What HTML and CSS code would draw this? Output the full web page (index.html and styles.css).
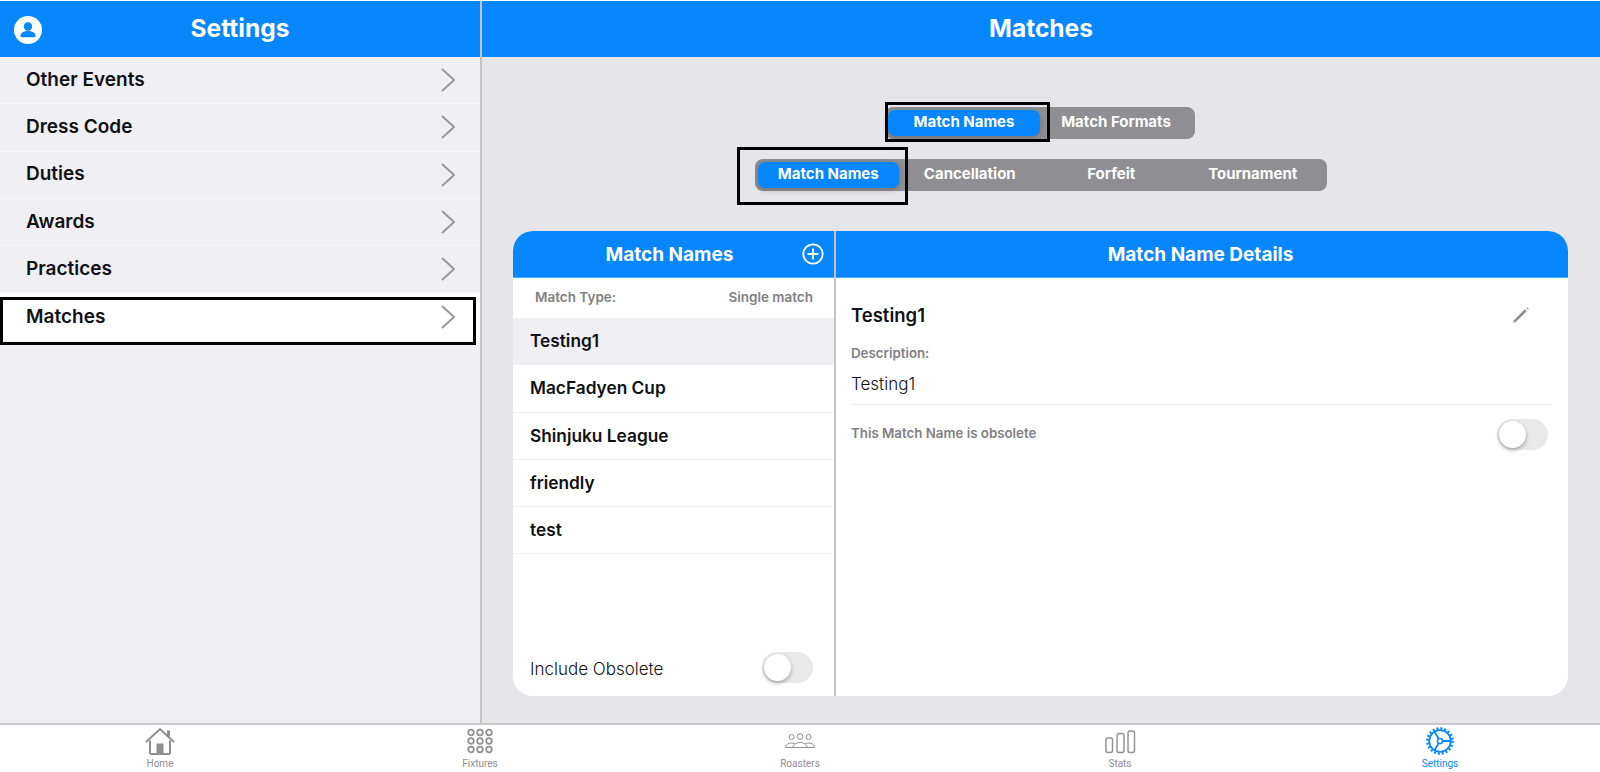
FILE: index.html
```html
<!DOCTYPE html>
<html lang="en">
<head>
  <meta charset="UTF-8" />
  <title>Settings - Matches</title>
  <link rel="stylesheet" href="styles.css">
</head>
<body>
  <div class="panes">
    <aside class="sidebar">
      <header class="topbar">
        <svg class="user-icon" viewBox="0 0 28 28" width="28" height="28">
          <circle cx="14" cy="14" r="14" fill="#fff"/>
          <circle cx="14" cy="10.5" r="4.2" fill="#0787ff"/>
          <path d="M6.5 20c0-3.6 3.6-5 7.500-5s7.500 1.400 7.500 5c0 .8-.5 1.200-1.200 1.200H7.700c-.7 0-1.200-.4-1.200-1.200z" fill="#0787ff"/>
        </svg>
        <h1>Settings</h1>
      </header>
      <ul class="menu">
        <li class="menu-row"><span>Other Events</span><svg class="chev" viewBox="0 0 14 24" width="14" height="24"><path d="M1 1l12 11L1 23" /></svg></li>
        <li class="menu-row"><span>Dress Code</span><svg class="chev" viewBox="0 0 14 24" width="14" height="24"><path d="M1 1l12 11L1 23" /></svg></li>
        <li class="menu-row"><span>Duties</span><svg class="chev" viewBox="0 0 14 24" width="14" height="24"><path d="M1 1l12 11L1 23" /></svg></li>
        <li class="menu-row"><span>Awards</span><svg class="chev" viewBox="0 0 14 24" width="14" height="24"><path d="M1 1l12 11L1 23" /></svg></li>
        <li class="menu-row"><span>Practices</span><svg class="chev" viewBox="0 0 14 24" width="14" height="24"><path d="M1 1l12 11L1 23" /></svg></li>
        <li class="menu-row active">
          <span>Matches</span><svg class="chev" viewBox="0 0 14 24" width="14" height="24"><path d="M1 1l12 11L1 23" /></svg>
          <i class="mark mark-row"></i>
        </li>
      </ul>
    </aside>

    <main class="content">
      <header class="topbar"><h1>Matches</h1></header>

      <div class="seg seg-top">
        <button class="seg-btn on">Match Names</button>
        <button class="seg-btn">Match Formats</button>
        <i class="mark mark-top"></i>
      </div>
      <div class="seg seg-sub">
        <button class="seg-btn on">Match Names</button>
        <button class="seg-btn">Cancellation</button>
        <button class="seg-btn">Forfeit</button>
        <button class="seg-btn">Tournament</button>
        <i class="mark mark-sub"></i>
      </div>

      <section class="card">
        <div class="list-col">
          <div class="card-head">
            <h2 class="list-title">Match Names</h2>
            <svg class="plus" viewBox="0 0 22 22" width="22" height="22">
              <circle cx="11" cy="11" r="9.700"/>
              <path d="M11 5.500v11M5.500 11h11"/>
            </svg>
          </div>
          <div class="type-row"><span>Match Type:</span><span>Single match</span></div>
          <ul class="names">
            <li class="name selected">Testing1</li>
            <li class="name">MacFadyen Cup</li>
            <li class="name">Shinjuku League</li>
            <li class="name">friendly</li>
            <li class="name">test</li>
          </ul>
          <div class="obsolete-row">
            <span>Include Obsolete</span>
            <div class="toggle"><div class="knob"></div></div>
          </div>
        </div>

        <div class="detail-col">
          <div class="card-head"><h2 class="detail-heading">Match Name Details</h2></div>
          <div class="detail-body">
            <div class="detail-title">
              <h3>Testing1</h3>
              <svg class="pencil" viewBox="0 0 18 18" width="18" height="18">
                <path d="M1.200 16.800l.7-2.600L12.800 3.300l1.900 1.900L3.800 16.100z" fill="#8e8e93"/>
                <path d="M14.300 1.900l.8-.7 1.700 1.700-.7.8z" fill="#8e8e93"/>
              </svg>
            </div>
            <div class="label">Description:</div>
            <div class="value">Testing1</div>
            <div class="obsolete-detail">
              <span class="label">This Match Name is obsolete</span>
              <div class="toggle"><div class="knob"></div></div>
            </div>
          </div>
        </div>
      </section>
    </main>
  </div>

  <nav class="tabs">
    <div class="tab">
      <svg viewBox="0 0 32 32" width="32" height="32">
        <g transform="translate(1 1.500)">
          <path d="M1 14.500L15 1.500l14 13" fill="none" stroke="#8e8e93" stroke-width="2"/>
          <path d="M22 3h3v7l-3-3z" fill="#8e8e93"/>
          <path d="M5 13v12c0 1 .6 1.500 1.500 1.500h17c.9 0 1.500-.5 1.500-1.500V13" fill="none" stroke="#8e8e93" stroke-width="2"/>
          <rect x="11.500" y="16" width="7" height="10.500" fill="#8e8e93"/>
        </g>
      </svg>
      <span>Home</span>
    </div>
    <div class="tab">
      <svg viewBox="0 0 32 32" width="32" height="32" fill="none" stroke="#8e8e93" stroke-width="1.700">
        <circle cx="7" cy="6.500" r="2.800"/><circle cx="16" cy="6.500" r="2.800"/><circle cx="25" cy="6.500" r="2.800"/>
        <circle cx="7" cy="15" r="2.800"/><circle cx="16" cy="15" r="2.800"/><circle cx="25" cy="15" r="2.800"/>
        <circle cx="7" cy="23.500" r="2.800"/><circle cx="16" cy="23.500" r="2.800"/><circle cx="25" cy="23.500" r="2.800"/>
      </svg>
      <span>Fixtures</span>
    </div>
    <div class="tab">
      <svg viewBox="0 0 32 32" width="32" height="32" fill="none" stroke="#8e8e93" stroke-width="1">
        <circle cx="7.700" cy="11" r="2.500"/><circle cx="16" cy="10.500" r="2.800"/><circle cx="24.500" cy="11" r="2.500"/>
        <path d="M1.500 21.500c0-2.600 2.500-4.500 6-4.500 1.200 0 2.300.2 3.200.7"/>
        <path d="M30.500 21.500c0-2.600-2.500-4.500-6-4.500-1.200 0-2.300.2-3.200.7"/>
        <path d="M9 21.500c0-2.800 3-5 7-5s7 2.200 7 5z"/>
        <path d="M1.500 21.500H9M23 21.500h7.500"/>
      </svg>
      <span>Roasters</span>
    </div>
    <div class="tab">
      <svg viewBox="0 0 32 32" width="32" height="32" fill="none" stroke="#8e8e93" stroke-width="1.400">
        <rect x="2" y="12" width="6.500" height="14.500" rx="2"/>
        <rect x="13" y="7.500" width="7" height="19" rx="2"/>
        <rect x="24" y="5" width="6.500" height="21.500" rx="2"/>
      </svg>
      <span>Stats</span>
    </div>
    <div class="tab current">
      <svg viewBox="0 0 32 32" width="32" height="32" fill="none" stroke="#0787ff">
        <g transform="translate(1 0)">
          <circle cx="15" cy="15" r="12.600" stroke-width="2.400" stroke-dasharray="2 1.960"/>
          <circle cx="15" cy="15" r="10.800" stroke-width="1.800"/>
          <circle cx="15" cy="15" r="2.600" stroke-width="1.500"/>
          <path d="M17.600 15h8M13.700 12.800L9.500 5.800M13.700 17.200l-4.200 7" stroke-width="1.800"/>
        </g>
      </svg>
      <span>Settings</span>
    </div>
  </nav>
</body>
</html>
```

FILE: styles.css
```css
* {
  box-sizing: border-box;
}

body {
  margin: 0;
  height: 772px;
  overflow: hidden;
  display: flex;
  flex-direction: column;
  padding-top: 1px;
  background: #fff;
  color: #111114;
  font-family: Inter, "Open Sans", sans-serif;
}

h1, h2, h3, ul {
  margin: 0;
  padding: 0;
}

ul {
  list-style: none;
}

.panes {
  flex: 1;
  display: flex;
  min-height: 0;
}

.topbar {
  height: 56px;
  display: flex;
  align-items: center;
  justify-content: center;
  position: relative;
  padding-bottom: 2px;
  background: #0787ff;
  color: #fff;
  flex-shrink: 0;
}

.topbar h1 {
  font-size: 24.500px;
  font-weight: 700;
}

.user-icon {
  position: absolute;
  left: 14px;
  top: 15px;
}

/* left list */
.sidebar {
  width: 482px;
  flex-shrink: 0;
  background: #efeff4;
  border-right: 2px solid #c4c4c6;
}

.menu-row {
  height: 47.300px;
  display: flex;
  align-items: center;
  justify-content: space-between;
  padding: 0 25px 0 26px;
  border-bottom: 1px solid #f7f7fa;
  font-size: 19px;
  font-weight: 600;
  position: relative;
}

.menu-row span {
  padding-bottom: 2px;
}

.menu-row.active {
  background: #fff;
  border-bottom: none;
}

.chev {
  fill: none;
  stroke: #98989d;
  stroke-width: 2;
}

.mark {
  position: absolute;
  border: 3px solid #000;
  pointer-events: none;
}

.mark-row {
  left: 0;
  top: 4px;
  width: 476px;
  height: 48px;
}

/* right side */
.content {
  flex: 1;
  min-width: 0;
  background: #e5e5ea;
  display: flex;
  flex-direction: column;
  align-items: center;
}

.content .topbar {
  width: 100%;
}

.seg {
  display: flex;
  position: relative;
  padding: 3px;
  background: #8e8e93;
  border-radius: 8px;
  height: 32px;
}

.seg-top {
  margin: 50px 2px 0 0;
}

.seg-sub {
  margin: 20px 1px 0 0;
}

.seg-btn {
  border: none;
  background: none;
  color: #fff;
  font-family: Inter, sans-serif;
  font-size: 15px;
  font-weight: 700;
  padding: 0 0 4px;
  border-radius: 7px;
}

.seg-top .seg-btn {
  width: 152px;
}

.seg-sub .seg-btn {
  width: 141.500px;
}

.seg-btn.on {
  background: #0787ff;
  box-shadow: 0 2px 6px rgba(0, 0, 0, 0.2);
}

.mark-top {
  left: 0;
  top: -5px;
  width: 165px;
  height: 40px;
}

.mark-sub {
  left: -18px;
  top: -12px;
  width: 171px;
  height: 58px;
}

.card {
  width: 1055px;
  height: 465px;
  margin-top: 40px;
  margin-left: 31px;
  align-self: flex-start;
  display: flex;
  background: #fff;
  border-radius: 20px;
  overflow: hidden;
}

.card-head {
  height: 47px;
  display: flex;
  align-items: center;
  justify-content: center;
  position: relative;
  background: #0787ff;
  color: #fff;
  border-bottom: 1px solid #4aa8ff;
  flex-shrink: 0;
}

.card-head h2 {
  font-size: 19px;
  font-weight: 700;
}

.list-title {
  padding-right: 8px;
}

.detail-heading {
  padding-right: 3px;
}

.plus {
  position: absolute;
  right: 10px;
  top: 12px;
  fill: none;
  stroke: #fff;
  stroke-width: 1.800;
}

.list-col {
  width: 323px;
  flex-shrink: 0;
  display: flex;
  flex-direction: column;
  border-right: 2px solid #c4c4c6;
}

.type-row {
  height: 40px;
  display: flex;
  align-items: center;
  justify-content: space-between;
  padding: 0 21px 3px 22px;
  color: #808084;
  font-size: 13.500px;
  font-weight: 600;
}

.names {
  flex: 1;
}

.name {
  height: 47.300px;
  display: flex;
  align-items: center;
  padding: 0 0 1px 17px;
  border-bottom: 1px solid #efeff4;
  font-size: 17.300px;
  font-weight: 600;
}

.name.selected {
  background: #efeff4;
}

.obsolete-row {
  height: 58px;
  display: flex;
  align-items: center;
  justify-content: space-between;
  padding: 0 21px 0 17px;
  font-size: 17px;
  font-weight: 300;
}

.obsolete-row span {
  padding-top: 3px;
}

.toggle {
  width: 51px;
  height: 31px;
  padding: 2px;
  border-radius: 16px;
  background: #e9e9ea;
}

.knob {
  width: 27px;
  height: 27px;
  border-radius: 50%;
  background: #fff;
  box-shadow: 0 2px 4px rgba(0, 0, 0, 0.3);
}

.detail-col {
  flex: 1;
  min-width: 0;
  display: flex;
  flex-direction: column;
}

.detail-body {
  padding: 0 16px 0 15px;
}

.detail-title {
  height: 67px;
  display: flex;
  align-items: center;
  justify-content: space-between;
  padding: 7px 22px 0 0;
}

.detail-title h3 {
  font-size: 18.500px;
  font-weight: 600;
}

.label {
  color: #808084;
  font-size: 13.300px;
  font-weight: 600;
}

.value {
  margin-top: 13px;
  padding-bottom: 10px;
  border-bottom: 1px solid #efeff4;
  font-size: 17px;
  font-weight: 300;
}

.obsolete-detail {
  display: flex;
  align-items: center;
  justify-content: space-between;
  padding: 14px 4px 0 0;
}

.obsolete-detail .label {
  padding-bottom: 4px;
}

/* bottom tabs */
.tabs {
  height: 49px;
  flex-shrink: 0;
  display: grid;
  grid-template-columns: repeat(5, 1fr);
  border-top: 2px solid #c8c8ca;
  background: #fff;
}

.tab {
  display: flex;
  flex-direction: column;
  align-items: center;
  justify-content: flex-end;
  padding-bottom: 2px;
  color: #8e8e93;
  font-family: Roboto, sans-serif;
  font-size: 10px;
  line-height: 12px;
}

.tab svg {
  display: block;
}

.tab.current {
  color: #0787ff;
}
```
